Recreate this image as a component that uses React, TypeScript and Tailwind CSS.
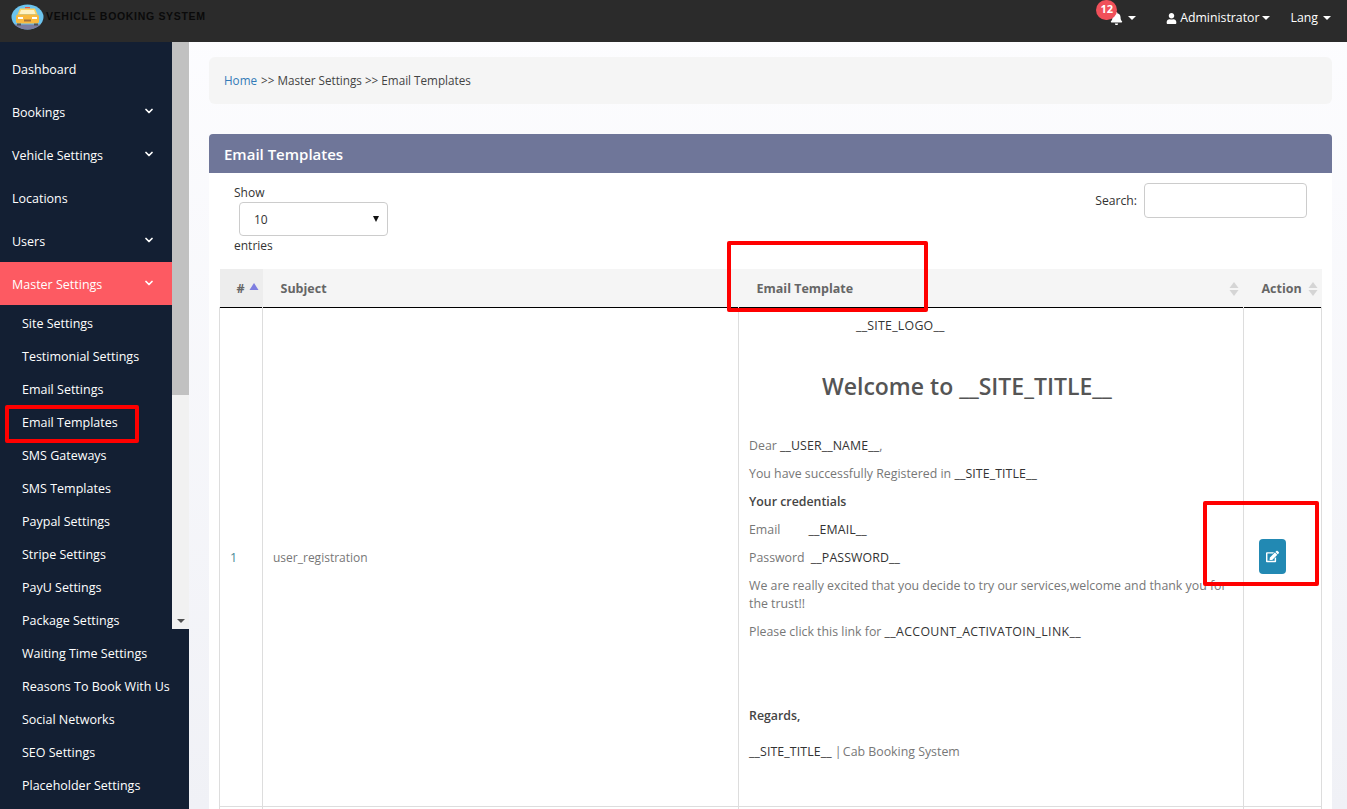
import React from "react";
import { FaBell, FaUser, FaEdit } from "react-icons/fa";
import { ChevronDown } from "lucide-react";

const Caret = () => (
  <span className="inline-block w-0 h-0 border-x-[4px] border-x-transparent border-t-[4px] border-t-white" />
);

const Sort = ({ up = "#d5d5d5" }: { up?: string }) => (
  <svg width="10" height="16" viewBox="0 0 10 16" className="shrink-0">
    <path d="M5 1 L9.5 7 L0.5 7 Z" fill={up} />
    <path d="M5 15 L9.5 9 L0.5 9 Z" fill="#d5d5d5" />
  </svg>
);

const Item = ({ label, arrow, active }: { label: string; arrow?: boolean; active?: boolean }) => (
  <div className={`h-[43px] flex items-center justify-between pl-3 pr-[17px] pt-[3px] text-white ${active ? "bg-[#fd5a62]" : ""}`}>
    <span>{label}</span>
    {arrow && <ChevronDown size={12} strokeWidth={3.5} className="text-white -mt-[5px]" />}
  </div>
);

const subs = [
  "Site Settings", "Testimonial Settings", "Email Settings", "Email Templates", "SMS Gateways", "SMS Templates",
  "Paypal Settings", "Stripe Settings", "PayU Settings", "Package Settings", "Waiting Time Settings",
  "Reasons To Book With Us", "Social Networks", "SEO Settings", "Placeholder Settings",
];

const Ph = ({ children }: { children: React.ReactNode }) => <span className="text-[#333] tracking-[0.1px]">{children}</span>;

export default function App() {
  return (
    <div className="relative h-[809px] overflow-hidden bg-linear-to-b from-[#fdfdff] to-[#f0f1f6] font-['Open_Sans','Liberation_Sans',sans-serif] text-[12.5px] text-[#777]">
      <header className="h-[42px] bg-[#2b2b2b] flex items-start text-white">
        <div className="flex items-center pl-[11px] pt-[4px]">
          <svg width="33" height="26" viewBox="0 0 33 26">
            <ellipse cx="16.5" cy="13" rx="16" ry="12.5" fill="#6cc4ee" />
            <path d="M3 20.5h27Q24 25.500 16.500 25.500T3 20.5z" fill="#7c7d9f" />
            <rect x="14" y="3" width="5" height="1.500" fill="#e9553f" />
            <path d="M9 4.500h15l2.500 6h-20z" fill="#fbd35f" />
            <path d="M10 6h13l1.500 4h-16z" fill="#fff2c4" />
            <rect x="5" y="10.500" width="23" height="9" rx="2" fill="#f9b93e" />
            <rect x="7" y="13" width="5" height="2" fill="#fff" />
            <rect x="21" y="13" width="5" height="2" fill="#fff" />
            <rect x="13" y="15.500" width="7" height="2" fill="#a8743a" />
            <rect x="6" y="19.500" width="4" height="2" fill="#555" />
            <rect x="23" y="19.500" width="4" height="2" fill="#555" />
          </svg>
          <span className="ml-[2px] -mt-[1px] font-['Liberation_Sans',sans-serif] font-bold text-[10.5px] tracking-[0.68px] text-[#0a0a0a] whitespace-nowrap">VEHICLE BOOKING SYSTEM</span>
        </div>
        <div className="ml-auto flex items-center h-[36px] pr-[16px] text-[12.3px]">
          <div className="relative flex items-center gap-[5px] mr-[30px]">
            <FaBell size={13} className="text-white" />
            <Caret />
            <span className="absolute -left-[14px] -top-[12px] w-[21px] h-[20px] rounded-full bg-[#f0505a] text-white font-bold text-[11px] flex items-center justify-center">12</span>
          </div>
          <FaUser size={11} className="text-white mr-[3px]" />
          <span className="text-white">Administrator</span>
          <span className="ml-[2px] mr-[21px] flex"><Caret /></span>
          <span className="text-white">Lang</span>
          <span className="ml-[5px] flex"><Caret /></span>
        </div>
      </header>

      <div className="flex h-[767px]">
        <aside className="relative w-[189px] shrink-0 bg-[#131f33] overflow-hidden">
          <div className="w-[172px]">
            <div className="h-[5px]" />
            <Item label="Dashboard" />
            <Item label="Bookings" arrow />
            <Item label="Vehicle Settings" arrow />
            <Item label="Locations" />
            <Item label="Users" arrow />
            <Item label="Master Settings" arrow active />
            <div className="h-[3px]" />
            {subs.map((s) => (
              <div key={s} className="h-[33px] flex items-center pl-[22px] text-white whitespace-nowrap">{s}</div>
            ))}
          </div>
          <div className="absolute right-0 top-0 w-[17px] h-[587px] bg-[#f1f1f1] flex flex-col">
            <div className="h-[353px] bg-[#c1c1c1]" />
            <div className="mt-auto h-[17px] flex items-center justify-center">
              <span className="inline-block w-0 h-0 border-x-[4px] border-x-transparent border-t-[4px] border-t-[#505050]" />
            </div>
          </div>
        </aside>

        <main className="flex-1 pl-5 pr-[15px] pt-[15px] min-w-0">
          <div className="h-[47px] bg-[#f5f5f5] rounded-md flex items-center px-[15px] text-[#444] text-[11.7px]">
            <span className="text-[#337ab7]">Home</span>
            <span className="ml-1">&gt;&gt; Master Settings &gt;&gt; Email Templates</span>
          </div>

          <section className="mt-[30px] bg-white h-[700px] rounded-t overflow-hidden">
            <div className="h-[39px] bg-[#6f7699] flex items-center px-[15px] pt-[2px] text-white text-[15px] font-semibold">Email Templates</div>
            <div className="relative h-[96px] pl-[25px] pt-[12px] text-[#333] text-[12px]">
              <div className="leading-[16px]">Show</div>
              <div className="ml-[5px] mt-[1px] w-[149px] h-[34px] border border-[#ccc] rounded bg-white flex items-center justify-between pl-[14px] pr-[8px]">
                <span className="pt-[1px]">10</span>
                <span className="inline-block w-0 h-0 border-x-[3.500px] border-x-transparent border-t-[6px] border-t-[#111]" />
              </div>
              <div className="mt-[1px] leading-[18px]">entries</div>
              <div className="absolute right-[25px] top-[10px] flex items-center gap-[7px]">
                <span className="pt-[2px] text-[12.2px]">Search:</span>
                <div className="w-[163px] h-[35px] border border-[#ccc] rounded bg-white" />
              </div>
            </div>

            <div className="mx-[10px]">
              <table className="w-[1102px] table-fixed border-collapse">
                <colgroup>
                  <col className="w-[43px]" />
                  <col className="w-[476px]" />
                  <col className="w-[505px]" />
                  <col className="w-[78px]" />
                </colgroup>
                <thead>
                  <tr className="h-[38px] bg-[#f5f5f5] border-b border-black text-[#666] font-bold text-[12.500px]">
                    <th className="bg-[#ededed] text-left pl-[17px] pt-[3px] font-bold">
                      <span className="inline-flex items-center gap-[4px]">#<svg width="10" height="8" viewBox="0 0 10 8" className="-mt-1"><path d="M5 0 L9.500 7 L0.500 7 Z" fill="#7e7ee0" /></svg></span>
                    </th>
                    <th className="text-left pl-[18px] pt-[3px] font-bold">Subject</th>
                    <th className="text-left pl-[18px] pr-[5px] pt-[3px] font-bold">
                      <div className="flex items-center justify-between"><span>Email Template</span><Sort /></div>
                    </th>
                    <th className="text-left pl-[18px] pr-[4px] pt-[3px] font-bold">
                      <div className="flex items-center justify-between"><span>Action</span><Sort /></div>
                    </th>
                  </tr>
                </thead>
                <tbody>
                  <tr className="h-[499px]">
                    <td className="border border-[#ddd] border-t-0 pl-[10px] pt-[4px] text-[#4a8a96] align-middle">1</td>
                    <td className="border border-[#ddd] border-t-0 pl-[10px] pt-[2px] align-middle text-[12px]">user_registration</td>
                    <td className="border border-[#ddd] border-t-0 px-[10px] align-top text-[12.35px]">
                      <div className="pl-[107px] pt-[9px] leading-[18px] text-[#333] tracking-[0.25px]">__SITE_LOGO__</div>
                      <h1 className="pl-[73px] mt-[34px] text-[23px] leading-[34px] font-semibold text-[#555]">Welcome to __SITE_TITLE__</h1>
                      <div className="mt-[34px] flex flex-col gap-[10px] leading-[18px]">
                        <p>Dear <Ph>__USER__NAME__</Ph>,</p>
                        <p>You have successfully Registered in <Ph>__SITE_TITLE__</Ph></p>
                        <p className="font-semibold text-[#444]">Your credentials</p>
                        <p>Email <span className="ml-[25px]"><Ph>__EMAIL__</Ph></span></p>
                        <p>Password <span className="ml-[3px]"><Ph>__PASSWORD__</Ph></span></p>
                        <p>We are really excited that you decide to try our services,welcome and thank you for the trust!!</p>
                        <p>Please click this link for <span className="text-[#333] tracking-[0.33px]">__ACCOUNT_ACTIVATOIN_LINK__</span></p>
                        <p className="mt-[56px] font-semibold text-[#444]">Regards,</p>
                        <p className="mt-[8px]"><Ph>__SITE_TITLE__</Ph> | <span className="-ml-[2px]">Cab Booking System</span></p>
                      </div>
                    </td>
                    <td className="border border-[#ddd] border-t-0 align-middle text-left pl-[15px]">
                      <button className="inline-flex w-[27px] h-[35px] rounded bg-[#2289b3] items-center justify-center text-white">
                        <FaEdit size={13} />
                      </button>
                    </td>
                  </tr>
                  <tr className="h-[20px]">
                    <td className="border border-[#ddd]" /><td className="border border-[#ddd]" /><td className="border border-[#ddd]" /><td className="border border-[#ddd]" />
                  </tr>
                </tbody>
              </table>
            </div>
          </section>
        </main>
      </div>

      <div className="absolute left-[5px] top-[405px] w-[134px] h-[38px] border-[4px] border-[#f00] rounded-[2px]" />
      <div className="absolute left-[727px] top-[241px] w-[201px] h-[71px] border-[4px] border-[#f00] rounded-[2px]" />
      <div className="absolute left-[1203px] top-[501px] w-[116px] h-[85px] border-[4px] border-[#f00] rounded-[2px]" />
    </div>
  );
}
